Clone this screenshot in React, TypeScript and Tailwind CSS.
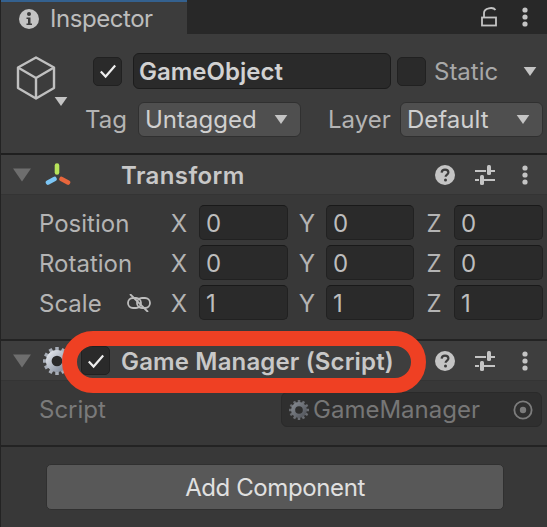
import React from "react";

const Tri = ({ className }: { className: string }) => (
  <svg viewBox="0 0 14 10" className={className}><path d="M0 0H14L7 10Z" fill="currentColor" /></svg>
);

const Check = () => (
  <svg viewBox="0 0 16 16" className="w-4 h-4" fill="none"><path d="M0.8 8.5L5.6 13.5L15.2 2.5" stroke="#eeeeee" strokeWidth="2.2" /></svg>
);

const Help = () => (
  <svg viewBox="0 0 20 20" className="w-5 h-5"><circle cx="10" cy="10" r="10" fill="#c4c4c4" /><path d="M6.6 7.6C6.8 5.6 8.2 4.6 10 4.6C12 4.6 13.4 5.8 13.4 7.4C13.4 9.6 10.6 9.6 10.6 11.8" fill="none" stroke="#3c3c3c" strokeWidth="2.2" /><circle cx="10.5" cy="15" r="1.5" fill="#3c3c3c" /></svg>
);

const Sliders = () => (
  <svg viewBox="0 0 20 20" className="w-5 h-5" fill="#c4c4c4"><rect x="0" y="5" width="11" height="2" /><rect x="16" y="5" width="4" height="2" /><rect x="12" y="0" width="4" height="10" rx="1.5" /><rect x="0" y="14" width="4" height="2" /><rect x="9" y="14" width="11" height="2" /><rect x="5" y="10" width="4" height="10" rx="1.5" /></svg>
);

const Dots = () => (
  <svg viewBox="0 0 6 20" className="w-[6px] h-5" fill="#c4c4c4"><circle cx="3" cy="3" r="2.6" /><circle cx="3" cy="10" r="2.6" /><circle cx="3" cy="17" r="2.6" /></svg>
);

const Gear = ({ size, dim }: { size: number; dim?: boolean }) => {
  const teeth = Array.from({ length: 12 }, (_, i) => i * 30);
  return (
    <svg viewBox="0 0 24 24" width={size} height={size} className="shrink-0">
      <defs>
        <linearGradient id={dim ? "gd" : "gb"} x1="0" y1="0" x2="1" y2="1">
          <stop offset="0" stopColor={dim ? "#8a8f96" : "#f2f4f8"} />
          <stop offset="1" stopColor={dim ? "#4c4f55" : "#6f7a8c"} />
        </linearGradient>
      </defs>
      {teeth.map((a) => (
        <rect key={a} x="10.5" y="0" width="3" height="5" fill={dim ? "#6a6d72" : "#a8aeb8"} transform={`rotate(${a} 12 12)`} />
      ))}
      <circle cx="12" cy="12" r="9.5" fill={`url(#${dim ? "gd" : "gb"})`} />
      <circle cx="12" cy="12" r="4.6" fill={dim ? "#2f2f2f" : "#2a2a2a"} />
    </svg>
  );
};

const Field = ({ axis, value, w, aw }: { axis: string; value: string; w: string; aw: string }) => (
  <div className={`flex items-center ${w}`}>
    <span className={`${aw} pt-[2px] text-center text-[#b4b4b4]`}>{axis}</span>
    <div className="h-[35px] flex-1 rounded-[5px] bg-[#2a2a2a] border border-[#212121] border-t-[#191919] pl-[6px] pt-[2px] flex items-center text-[#bdbdbd]">{value}</div>
  </div>
);

const Row = ({ label, x, y, z, icon }: { label: string; x: string; y: string; z: string; icon?: React.ReactNode }) => (
  <div className="flex items-center h-[35px]">
    <div className="w-[160px] pl-[38px] flex items-center text-[#b4b4b4]">
      <span className="w-[88px] pt-[2px]">{label}</span>
      {icon}
    </div>
    <div className="flex">
      <Field axis="X" value={x} w="w-[127px]" aw="w-[38px] pr-[2px]" />
      <Field axis="Y" value={y} w="w-[126px]" aw="w-[38px]" />
      <Field axis="Z" value={z} w="w-[129px]" aw="w-[40px]" />
    </div>
  </div>
);

const SectionHead = ({ children, icon }: { children?: React.ReactNode; icon: React.ReactNode }) => (
  <div className="relative h-[40px] flex items-center bg-[#3e3e3e] border-b border-[#343434] pl-[12px] pr-[19px]">
    <Tri className="w-[18px] h-[16px] text-[#6e6e6e]" />
    <div className="w-[14px]" />
    {icon}
    {children}
    <div className="ml-auto flex items-center">
      <Help />
      <div className="w-[20px]" />
      <Sliders />
      <div className="w-[27px]" />
      <Dots />
    </div>
  </div>
);

export default function App() {
  return (
    <div className="relative w-[547px] h-[527px] overflow-hidden bg-[#383838] border-l border-[#232323] text-[24px] leading-none" style={{ fontFamily: "Inter, 'Liberation Sans', sans-serif" }}>
      <div className="h-[34px] flex bg-[#282828]">
        <div className="w-[186px] h-[35px] bg-[#3c3c3c] border-t-2 border-[#34618f] flex items-center pl-[18px] text-[#bdbdbd]">
          <svg viewBox="0 0 20 20" className="w-5 h-5 mr-[11px]"><circle cx="10" cy="10" r="10" fill="#c4c4c4" /><circle cx="10" cy="5" r="2" fill="#3c3c3c" /><path d="M7.5 8.5H11.5V14.5H13V16H7.5V14.5H9V10H7.5Z" fill="#3c3c3c" /></svg>
          <span className="tracking-[-0.45px]">Inspector</span>
        </div>
        <div className="ml-auto flex items-center pr-[19px]">
          <svg viewBox="0 0 16 20" className="w-4 h-5 mr-[25px]" fill="none" stroke="#c4c4c4" strokeWidth="1.8"><rect x="1" y="10.5" width="14" height="8" /><path d="M3 10.5V6C3 1 12 -0.5 14.5 3" /></svg>
          <Dots />
        </div>
      </div>

      <div className="h-[121px] bg-[#3c3c3c] border-b-2 border-[#1f1f1f] relative pl-[15px] pr-[3px] flex">
        <div className="w-[68px] shrink-0 pt-[22px] relative">
          <svg viewBox="0 0 40 44" className="w-[40px] h-[44px]" fill="none" stroke="#c0c0c0" strokeWidth="2.4" strokeLinejoin="round"><path d="M20 1.5L38 11.5V32L20 42.5L2 32V11.5Z" /><path d="M2 11.5L20 22L38 11.5M20 22V42.5" /></svg>
          <Tri className="absolute left-[38px] top-[63px] w-[14px] h-[9px] text-[#c4c4c4]" />
        </div>
        <div className="flex-1 flex flex-col pt-[19px]">
          <div className="flex items-center h-[36px]">
            <div className="ml-[9px] w-[29px] h-[29px] rounded-[5px] bg-[#2a2a2a] border border-[#212121] flex items-center justify-center"><Check /></div>
            <div className="ml-[11px] w-[258px] h-[36px] rounded-[6px] bg-[#2a2a2a] border border-[#1c1c1c] flex items-center pl-[5px] pt-[2px] font-semibold text-[#d2d2d2]">GameObject</div>
            <div className="ml-[6px] w-[29px] h-[29px] rounded-[5px] bg-[#2a2a2a] border border-[#212121]" />
            <span className="ml-[8px] pt-[2px] text-[#a8a8a8]">Static</span>
            <Tri className="ml-auto mr-[7px] w-[14px] h-[9px] text-[#c4c4c4]" />
          </div>
          <div className="flex items-center h-[35px] mt-[13px] text-[#b4b4b4]">
            <span className="ml-[1px] w-[53px]">Tag</span>
            <div className="w-[163px] h-[35px] rounded-[6px] bg-[#4f4f4f] border border-[#303030] flex items-center pl-[6px] pr-[12px] text-[#d0d0d0]">
              <span>Untagged</span>
              <Tri className="ml-auto w-[14px] h-[9px] text-[#c4c4c4]" />
            </div>
            <span className="ml-[27px] w-[72px]">Layer</span>
            <div className="w-[143px] h-[35px] rounded-[6px] bg-[#4f4f4f] border border-[#303030] flex items-center pl-[6px] pr-[12px] text-[#d0d0d0]">
              <span>Default</span>
              <Tri className="ml-auto w-[14px] h-[9px] text-[#c4c4c4]" />
            </div>
          </div>
        </div>
      </div>

      <SectionHead
        icon={
          <svg viewBox="0 0 26 23" className="w-[26px] h-[23px]" fill="none" strokeWidth="4.6" strokeLinecap="round">
            <path d="M12 2.5V9.5" stroke="#b7e35a" />
            <path d="M16.5 16L23 19.5" stroke="#e8663c" />
            <path d="M3 19.5L9.5 16" stroke="#7cc6f5" />
          </svg>
        }
      >
        <span className="ml-[50px] pt-[2px] font-semibold tracking-[0.4px] text-[#c8c8c8]">Transform</span>
      </SectionHead>

      <div className="h-[144px] pt-[10px] flex flex-col gap-[5px]">
        <Row label="Position" x="0" y="0" z="0" />
        <Row label="Rotation" x="0" y="0" z="0" />
        <Row
          label="Scale"
          x="1"
          y="1"
          z="1"
          icon={
            <svg viewBox="0 0 24 18" className="w-[24px] h-[18px]" fill="none" stroke="#bdbdbd" strokeWidth="1.8">
              <rect x="1" y="4" width="13" height="10" rx="5" />
              <rect x="10" y="4" width="13" height="10" rx="5" />
              <path d="M3 0L21 18" />
            </svg>
          }
        />
      </div>

      <div className="h-[2px] bg-[#232323]" />

      <SectionHead icon={<div className="-ml-[2px]"><Gear size={28} /></div>}>
        <div className="ml-[10px] w-[29px] h-[29px] rounded-[5px] bg-[#2a2a2a] border border-[#212121] flex items-center justify-center"><Check /></div>
        <span className="ml-[11px] pt-[2px] font-semibold tracking-[0.15px] text-[#c8c8c8]">Game Manager (Script)</span>
      </SectionHead>

      <div className="h-[64px] relative flex items-start pt-[11px] pl-[38px] pr-[5px]">
        <span className="text-[#7a7a7a] leading-[35px]">Script</span>
        <div className="ml-auto w-[261px] h-[35px] rounded-[6px] bg-[#2f2f2f] border border-[#2a2a2a] flex items-center pl-[7px] pr-[8px] text-[#767676] overflow-hidden">
          <Gear size={20} dim />
          <span className="ml-[4px]">GameManager</span>
          <svg viewBox="0 0 22 22" className="ml-auto w-[20px] h-[20px]" fill="none"><circle cx="11" cy="11" r="9.5" stroke="#7c7c7c" strokeWidth="2" /><circle cx="11" cy="11" r="3.5" fill="#7c7c7c" /></svg>
        </div>
      </div>

      <div className="h-[2px] bg-[#232323]" />

      <div className="flex pl-[45px] pt-[17px]">
        <div className="w-[458px] h-[46px] rounded-[5px] bg-[#585858] border border-[#303030] flex items-center justify-center pt-[2px] tracking-[-0.4px] text-[#e0e0e0]">Add Component</div>
      </div>

      <div className="absolute left-[61px] top-[331px] w-[364px] h-[62px] rounded-[31px] border-[15px] border-[#ef4023]" />
    </div>
  );
}
